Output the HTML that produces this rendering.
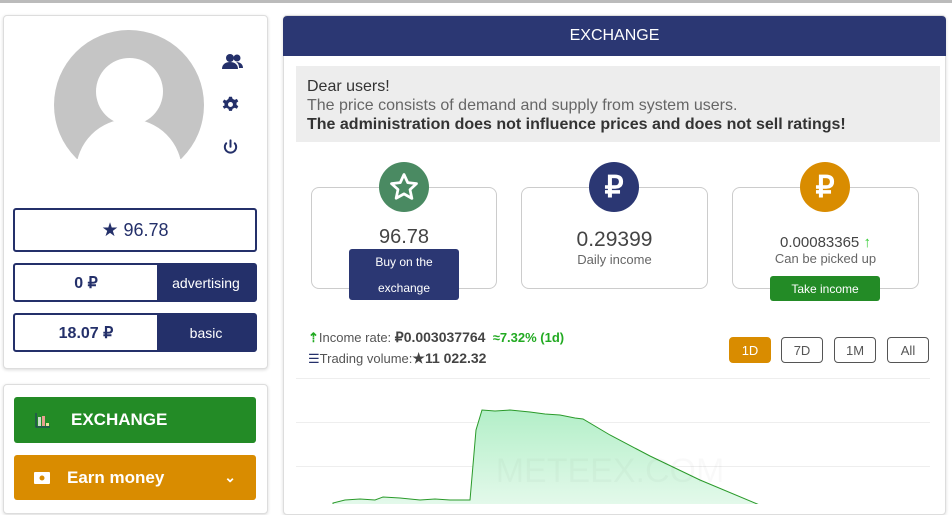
<!DOCTYPE html>
<html><head><meta charset="utf-8"><style>
*{box-sizing:border-box;margin:0;padding:0}
body{width:952px;height:504px;overflow:hidden;background:#fff;font-family:"Liberation Sans",sans-serif;position:relative}
.abs{position:absolute}
.card{position:absolute;background:#fff;border:1px solid #ddd;border-radius:4px;box-shadow:0 1px 3px rgba(0,0,0,.15)}
.box{position:absolute;border:2px solid #24306a;border-radius:3px;color:#24306a;display:flex}
.box .l{flex:1;display:flex;align-items:center;justify-content:center;font-weight:bold;font-size:16px}
.box .r{width:98px;background:#24306a;color:#fff;display:flex;align-items:center;justify-content:center;font-size:14px}
.sc{position:absolute;border:1px solid #ccc;border-radius:8px;top:187px;height:102px;text-align:center;color:#3c4250}
.circ{position:absolute;width:50px;height:50px;border-radius:50%;top:162px;color:#fff;display:flex;align-items:center;justify-content:center;font-size:30px;font-weight:bold}
.tb{position:absolute;top:337px;height:26px;border:1px solid #555;border-radius:4px;font-size:13px;color:#555;display:flex;align-items:center;justify-content:center}
</style></head><body>
<div class="abs" style="left:0;top:0;width:952px;height:3px;background:#bbb"></div>
<div class="card" style="left:3px;top:15px;width:265px;height:354px"></div>
<div class="abs" style="left:54px;top:30px;width:150px;height:129px;overflow:hidden">
 <div class="abs" style="left:0;top:0;width:150px;height:150px;border-radius:50%;background:#c5c5c5"></div>
 <div class="abs" style="left:42px;top:28px;width:67px;height:67px;border-radius:50%;background:#fff"></div>
 <div class="abs" style="left:22px;top:89px;width:106px;height:100px;border-radius:53px 53px 0 0;background:#fff"></div>
</div>
<svg class="abs" style="left:222px;top:53px" width="22" height="18" viewBox="0 0 22 18" fill="#24306a"><circle cx="8" cy="5" r="4"/><circle cx="15" cy="5" r="3.5"/><path d="M0 16c0-5 4-7 8-7s8 2 8 7z"/><path d="M14 9c4 0 7 2 7 6h-4c0-3-1-5-3-6z"/></svg>
<svg class="abs" style="left:222px;top:96px" width="17" height="17" viewBox="0 0 24 24" fill="#24306a"><path d="M10 1h4l1 3 3 1.5 3-1.5 2 3.5-2.5 2v3l2.5 2-2 3.5-3-1.5-3 1.5-1 3h-4l-1-3-3-1.5-3 1.5-2-3.5L3.5 13.5v-3L1 8.5 3 5l3 1.5L9 4z"/><circle cx="12" cy="12" r="3.5" fill="#fff"/></svg>
<svg class="abs" style="left:222px;top:139px" width="17" height="17" viewBox="0 0 24 24" fill="none" stroke="#24306a" stroke-width="2.8" stroke-linecap="round"><path d="M12 2v9"/><path d="M6 6a8 8 0 1 0 12 0"/></svg>
<div class="box" style="left:13px;top:208px;width:244px;height:44px;align-items:center;justify-content:center;font-size:18px"><span style="font-size:19px">★</span>&nbsp;96.78</div>
<div class="box" style="left:13px;top:263px;width:244px;height:39px"><div class="l">0 ₽</div><div class="r">advertising</div></div>
<div class="box" style="left:13px;top:313px;width:244px;height:39px"><div class="l">18.07 ₽</div><div class="r">basic</div></div>
<div class="card" style="left:3px;top:384px;width:265px;height:130px"></div>
<div class="abs" style="left:14px;top:397px;width:242px;height:46px;background:#238b26;border-radius:3px;color:#fff;font-weight:bold;font-size:17px;display:flex;align-items:center">
 <svg style="margin-left:21px" width="16" height="16"><path d="M1 1v14h14" stroke="#24306a" fill="none"/><rect x="3" y="5" width="3" height="9" fill="#c8e0c8"/><rect x="7" y="4" width="3" height="10" fill="#e8a090"/><rect x="11" y="11" width="3" height="3" fill="#f0e0a0"/></svg>
 <span style="margin-left:20px">EXCHANGE</span></div>
<div class="abs" style="left:14px;top:455px;width:242px;height:45px;background:#d98c00;border-radius:3px;color:#fff;font-weight:bold;font-size:17px;display:flex;align-items:center">
 <svg style="margin-left:20px" width="16" height="12"><rect width="16" height="12" rx="1" fill="#fff"/><circle cx="8" cy="6" r="2.5" fill="#d98c00"/></svg>
 <span style="margin-left:17px">Earn money</span><span style="margin-left:auto;margin-right:20px;font-size:14px">&#x2304;</span></div>

<div class="card" style="left:283px;top:15px;width:663px;height:500px"></div>
<div class="abs" style="left:283px;top:16px;width:663px;height:40px;background:#2b3773;border-radius:4px 4px 0 0;color:#fff;font-size:16px;display:flex;align-items:center;justify-content:center">EXCHANGE</div>
<div class="abs" style="left:296px;top:66px;width:644px;height:76px;background:#ededed;padding:11px 11px;font-size:16px;line-height:19px;color:#333">
 <div>Dear users!</div><div style="color:#666">The price consists of demand and supply from system users.</div><div style="font-weight:bold;color:#333">The administration does not influence prices and does not sell ratings!</div></div>

<div class="sc" style="left:311px;width:186px"><div style="margin-top:38px;font-size:20px;color:#444">96.78</div></div>
<div class="sc" style="left:521px;width:187px"><div style="margin-top:40px;font-size:21px;color:#444">0.29399</div><div style="font-size:13px;color:#666">Daily income</div></div>
<div class="sc" style="left:732px;width:187px"><div style="margin-top:46px;font-size:15px;color:#444">0.00083365 <span style="color:#3c3">↑</span></div><div style="font-size:13px;color:#666">Can be picked up</div></div>
<div class="circ" style="left:379px;background:#4a8a62"><svg width="30" height="30" viewBox="0 0 24 24"><path d="M12 2l3 6.5 7 .8-5.2 4.8 1.5 7L12 17.5 5.7 21l1.5-7L2 9.3l7-.8z" fill="none" stroke="#fff" stroke-width="2.2" stroke-linejoin="round"/></svg></div>
<div class="circ" style="left:589px;background:#2b3773">₽</div>
<div class="circ" style="left:800px;background:#d98c00">₽</div>
<div class="abs" style="left:349px;top:249px;width:110px;height:51px;background:#2b3773;border-radius:3px;color:#fff;font-size:12px;text-align:center;line-height:26px">Buy on the<br>exchange</div>
<div class="abs" style="left:770px;top:276px;width:110px;height:25px;background:#238b26;border-radius:3px;color:#fff;font-size:12px;display:flex;align-items:center;justify-content:center">Take income</div>

<div class="abs" style="left:308px;top:329px;font-size:13px;color:#555;white-space:nowrap"><span style="color:#2a2;font-weight:bold">⇡</span>Income rate: <span style="color:#444;font-size:14px;font-weight:bold">₽0.003037764</span> &nbsp;<span style="color:#2a2;font-weight:bold">≈7.32% (1d)</span></div>
<div class="abs" style="left:308px;top:350px;font-size:13px;color:#555;white-space:nowrap"><span style="color:#24306a">☰</span>Trading volume:<span style="color:#444;font-size:14px;font-weight:bold">★11 022.32</span></div>
<div class="tb" style="left:729px;width:42px;background:#d98c00;border-color:#d98c00;color:#fff">1D</div>
<div class="tb" style="left:781px;width:42px">7D</div>
<div class="tb" style="left:834px;width:42px">1M</div>
<div class="tb" style="left:887px;width:42px">All</div>
<div class="abs" style="left:296px;top:378px;width:634px;height:1px;background:#eee"></div>
<div class="abs" style="left:296px;top:422px;width:634px;height:1px;background:#eee"></div>
<div class="abs" style="left:296px;top:466px;width:634px;height:1px;background:#eee"></div>
<svg class="abs" style="left:0;top:0" width="952" height="504">
<defs><linearGradient id="g" x1="0" y1="0" x2="0" y2="1"><stop offset="0" stop-color="#b3efc8"/><stop offset="1" stop-color="#e4f9eb"/></linearGradient></defs>
<path d="M333 506L333 503 345 500 360 499 375 500 383 497 400 498 420 500 435 499 450 500 470 500 476 430 482 410 495 411 510 410 530 412 545 414 560 415 575 418 583 419 610 435 650 456 700 480 762 506Z" fill="url(#g)" stroke="#2a9a2a" stroke-width="1"/>
<text x="610" y="482" font-family="Liberation Sans" font-size="34" fill="#000" fill-opacity="0.025" text-anchor="middle">METEEX.COM</text>
</svg>
</body></html>
